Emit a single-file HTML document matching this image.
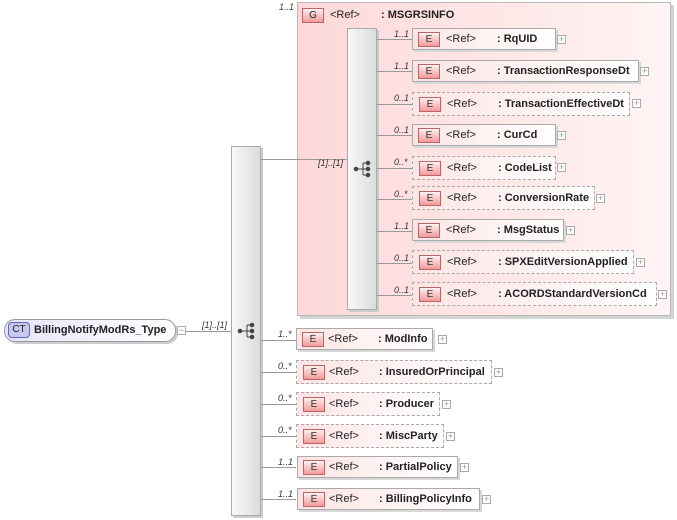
<!DOCTYPE html>
<html><head><style>
*{margin:0;padding:0;box-sizing:border-box}
body{width:677px;height:520px;background:#fff;position:relative;overflow:hidden;font-family:"Liberation Sans",Arial,sans-serif;font-size:11px;font-weight:bold;color:#222}
.a{position:absolute}
.grp{left:297px;top:2px;width:374px;height:314px;border:1px solid #b8b8b8;background:linear-gradient(90deg,#fdd8d8,#fff4f4);box-shadow:3px 3px 0 #d4d4d4}
.bar{background:linear-gradient(90deg,#f8f8f8,#dcdcdc);border:1px solid #aaa;box-shadow:2px 2px 0 #ccc}
.e{height:22px;border:1px solid #aaa;background:linear-gradient(90deg,#fde4e4,#fff);box-shadow:2px 2px 0 #d8d8d8}
.e.d{height:24px;border:1px dashed #aaa;box-shadow:none}
.b{position:absolute;left:5px;top:3px;width:22px;height:15px;border:1px solid #b66;background:linear-gradient(#fff0f0,#f29a9a);font-weight:normal;text-align:center;line-height:13px;font-size:10px;color:#333}
.d .b{top:4px;left:6px}
.r{position:absolute;top:4px}
.r.n{font-weight:normal}
.d .r{top:5px}
.p{position:absolute;width:9px;height:9px;border:1px solid #aaa;background:#fff;font-size:9px;line-height:7px;text-align:center;color:#999;font-weight:normal}
.l{position:absolute;height:1px;background:#999}
.m{position:absolute;font-style:italic;font-weight:normal;font-size:9px;color:#333}
</style></head><body>
<div class="a grp"></div>
<div class="m" style="left:279px;top:2px">1..1</div>
<div class="a" style="left:302px;top:8px;width:22px;height:15px;border:1px solid #b66;background:linear-gradient(#fff0f0,#f29a9a);text-align:center;line-height:13px;font-weight:normal;font-size:10px">G</div>
<div class="a" style="left:330px;top:9px;font-weight:normal">&lt;Ref&gt;</div>
<div class="a" style="left:381px;top:9px">: MSGRSINFO</div>

<div class="a bar" style="left:347px;top:28px;width:30px;height:282px"></div>
<div class="a bar" style="left:231px;top:146px;width:30px;height:370px"></div>

<div class="a" style="left:4px;top:319px;width:172px;height:23px;border:1px solid #999;border-radius:11px;background:linear-gradient(90deg,#e4e4fa,#fff);box-shadow:2px 2px 0 #ccc"></div>
<div class="a" style="left:8px;top:322px;width:22px;height:16px;border:1px solid #66a;border-radius:4px;background:#c8c8f4;text-align:center;line-height:14px;font-weight:normal;font-size:10px">CT</div>
<div class="a" style="left:34px;top:324px">BillingNotifyModRs_Type</div>
<div class="p" style="left:177px;top:326px">−</div>
<div class="l" style="left:186px;top:331px;width:45px"></div>
<div class="m" style="left:202px;top:320px">[1]..[1]</div>
<div class="l" style="left:261px;top:159px;width:86px"></div>
<div class="m" style="left:318px;top:158px">[1]..[1]</div>

<svg class="a" style="left:237px;top:322px" width="20" height="18"><g fill="#444" stroke="#444"><circle cx="3" cy="9" r="1.8"/><line x1="3" y1="9" x2="10" y2="9"/><line x1="10" y1="3" x2="10" y2="15"/><line x1="10" y1="3" x2="15" y2="3"/><line x1="10" y1="9" x2="15" y2="9"/><line x1="10" y1="15" x2="15" y2="15"/><circle cx="15" cy="3" r="1.8"/><circle cx="15" cy="9" r="1.8"/><circle cx="15" cy="15" r="1.8"/></g></svg>
<svg class="a" style="left:353px;top:160px" width="20" height="18"><g fill="#444" stroke="#444"><circle cx="3" cy="9" r="1.8"/><line x1="3" y1="9" x2="10" y2="9"/><line x1="10" y1="3" x2="10" y2="15"/><line x1="10" y1="3" x2="15" y2="3"/><line x1="10" y1="9" x2="15" y2="9"/><line x1="10" y1="15" x2="15" y2="15"/><circle cx="15" cy="3" r="1.8"/><circle cx="15" cy="9" r="1.8"/><circle cx="15" cy="15" r="1.8"/></g></svg>

<div class="l" style="left:377px;top:39px;width:35px"></div><div class="m" style="left:394px;top:29px">1..1</div>
<div class="a e" style="left:412px;top:28px;width:144px"><div class="b">E</div><span class="r n" style="left:33px">&lt;Ref&gt;</span><span class="r" style="left:84px">: RqUID</span></div><div class="p" style="left:557px;top:35px">+</div>

<div class="l" style="left:377px;top:71px;width:35px"></div><div class="m" style="left:394px;top:61px">1..1</div>
<div class="a e" style="left:412px;top:60px;width:227px"><div class="b">E</div><span class="r n" style="left:33px">&lt;Ref&gt;</span><span class="r" style="left:84px">: TransactionResponseDt</span></div><div class="p" style="left:640px;top:67px">+</div>

<div class="l" style="left:377px;top:104px;width:35px"></div><div class="m" style="left:394px;top:93px">0..1</div>
<div class="a e d" style="left:412px;top:92px;width:218px"><div class="b">E</div><span class="r n" style="left:34px">&lt;Ref&gt;</span><span class="r" style="left:85px">: TransactionEffectiveDt</span></div><div class="p" style="left:632px;top:99px">+</div>

<div class="l" style="left:377px;top:135px;width:35px"></div><div class="m" style="left:394px;top:125px">0..1</div>
<div class="a e" style="left:412px;top:124px;width:144px"><div class="b">E</div><span class="r n" style="left:33px">&lt;Ref&gt;</span><span class="r" style="left:84px">: CurCd</span></div><div class="p" style="left:557px;top:131px">+</div>

<div class="l" style="left:377px;top:168px;width:35px"></div><div class="m" style="left:394px;top:157px">0..*</div>
<div class="a e d" style="left:412px;top:156px;width:144px"><div class="b">E</div><span class="r n" style="left:34px">&lt;Ref&gt;</span><span class="r" style="left:85px">: CodeList</span></div><div class="p" style="left:557px;top:163px">+</div>

<div class="l" style="left:377px;top:199px;width:35px"></div><div class="m" style="left:394px;top:189px">0..*</div>
<div class="a e d" style="left:412px;top:186px;width:183px"><div class="b">E</div><span class="r n" style="left:34px">&lt;Ref&gt;</span><span class="r" style="left:85px">: ConversionRate</span></div><div class="p" style="left:596px;top:194px">+</div>

<div class="l" style="left:377px;top:231px;width:35px"></div><div class="m" style="left:394px;top:221px">1..1</div>
<div class="a e" style="left:412px;top:219px;width:152px"><div class="b">E</div><span class="r n" style="left:33px">&lt;Ref&gt;</span><span class="r" style="left:84px">: MsgStatus</span></div><div class="p" style="left:566px;top:226px">+</div>

<div class="l" style="left:377px;top:263px;width:35px"></div><div class="m" style="left:394px;top:253px">0..1</div>
<div class="a e d" style="left:412px;top:250px;width:222px"><div class="b">E</div><span class="r n" style="left:34px">&lt;Ref&gt;</span><span class="r" style="left:85px">: SPXEditVersionApplied</span></div><div class="p" style="left:636px;top:258px">+</div>

<div class="l" style="left:377px;top:295px;width:35px"></div><div class="m" style="left:394px;top:285px">0..1</div>
<div class="a e d" style="left:412px;top:282px;width:245px"><div class="b">E</div><span class="r n" style="left:34px">&lt;Ref&gt;</span><span class="r" style="left:85px">: ACORDStandardVersionCd</span></div><div class="p" style="left:658px;top:290px">+</div>

<div class="l" style="left:261px;top:340px;width:35px"></div><div class="m" style="left:278px;top:329px">1..*</div>
<div class="a e" style="left:296px;top:328px;width:137px"><div class="b">E</div><span class="r n" style="left:31px">&lt;Ref&gt;</span><span class="r" style="left:81px">: ModInfo</span></div><div class="p" style="left:438px;top:335px">+</div>

<div class="l" style="left:261px;top:372px;width:35px"></div><div class="m" style="left:278px;top:361px">0..*</div>
<div class="a e d" style="left:296px;top:360px;width:196px"><div class="b">E</div><span class="r n" style="left:32px">&lt;Ref&gt;</span><span class="r" style="left:82px">: InsuredOrPrincipal</span></div><div class="p" style="left:494px;top:368px">+</div>

<div class="l" style="left:261px;top:404px;width:35px"></div><div class="m" style="left:278px;top:393px">0..*</div>
<div class="a e d" style="left:296px;top:392px;width:144px"><div class="b">E</div><span class="r n" style="left:32px">&lt;Ref&gt;</span><span class="r" style="left:82px">: Producer</span></div><div class="p" style="left:442px;top:400px">+</div>

<div class="l" style="left:261px;top:436px;width:35px"></div><div class="m" style="left:278px;top:425px">0..*</div>
<div class="a e d" style="left:296px;top:424px;width:148px"><div class="b">E</div><span class="r n" style="left:32px">&lt;Ref&gt;</span><span class="r" style="left:82px">: MiscParty</span></div><div class="p" style="left:446px;top:432px">+</div>

<div class="l" style="left:261px;top:467px;width:35px"></div><div class="m" style="left:278px;top:457px">1..1</div>
<div class="a e" style="left:297px;top:456px;width:161px"><div class="b">E</div><span class="r n" style="left:31px">&lt;Ref&gt;</span><span class="r" style="left:81px">: PartialPolicy</span></div><div class="p" style="left:460px;top:463px">+</div>

<div class="l" style="left:261px;top:499px;width:35px"></div><div class="m" style="left:278px;top:489px">1..1</div>
<div class="a e" style="left:297px;top:488px;width:183px"><div class="b">E</div><span class="r n" style="left:31px">&lt;Ref&gt;</span><span class="r" style="left:81px">: BillingPolicyInfo</span></div><div class="p" style="left:482px;top:495px">+</div>
</body></html>
